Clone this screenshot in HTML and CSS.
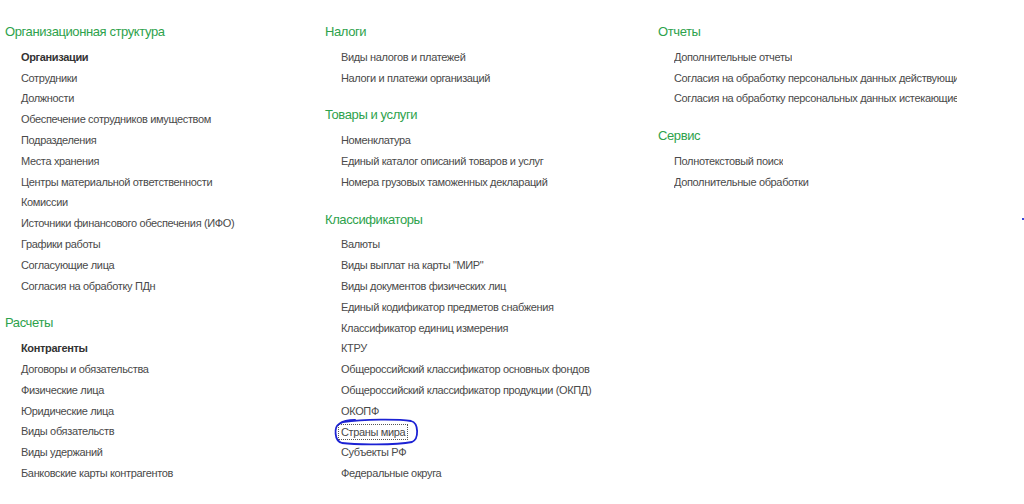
FILE: index.html
```html
<!DOCTYPE html>
<html lang="ru">
<head>
  <meta charset="UTF-8">
  <title>Нормативно-справочная информация</title>
  <link rel="stylesheet" href="styles.css">
</head>
<body>
  <div class="panel">
    <div class="column">
      <div class="section">
        <h2>Организационная структура</h2>
        <a class="strong">Организации</a>
        <a>Сотрудники</a>
        <a>Должности</a>
        <a>Обеспечение сотрудников имуществом</a>
        <a>Подразделения</a>
        <a>Места хранения</a>
        <a>Центры материальной ответственности</a>
        <a>Комиссии</a>
        <a>Источники финансового обеспечения (ИФО)</a>
        <a>Графики работы</a>
        <a>Согласующие лица</a>
        <a>Согласия на обработку ПДн</a>
      </div>
      <div class="section">
        <h2>Расчеты</h2>
        <a class="strong">Контрагенты</a>
        <a>Договоры и обязательства</a>
        <a>Физические лица</a>
        <a>Юридические лица</a>
        <a>Виды обязательств</a>
        <a>Виды удержаний</a>
        <a>Банковские карты контрагентов</a>
      </div>
    </div>

    <div class="column">
      <div class="section">
        <h2>Налоги</h2>
        <a>Виды налогов и платежей</a>
        <a>Налоги и платежи организаций</a>
      </div>
      <div class="section">
        <h2>Товары и услуги</h2>
        <a>Номенклатура</a>
        <a>Единый каталог описаний товаров и услуг</a>
        <a>Номера грузовых таможенных деклараций</a>
      </div>
      <div class="section">
        <h2>Классификаторы</h2>
        <a>Валюты</a>
        <a>Виды выплат на карты "МИР"</a>
        <a>Виды документов физических лиц</a>
        <a>Единый кодификатор предметов снабжения</a>
        <a>Классификатор единиц измерения</a>
        <a>КТРУ</a>
        <a>Общероссийский классификатор основных фондов</a>
        <a>Общероссийский классификатор продукции (ОКПД)</a>
        <a>ОКОПФ</a>
        <a class="current">Страны мира
          <svg class="mark" width="86" height="28" viewBox="0 0 86 28">
            <path d="M9 4 C30 1 65 1 77 3 C85 5 85 21 78 24 C62 27 22 27 8 25 C0 23 0 9 5 6 C9 3 15 2 21 2" fill="none" stroke="#1c22d4" stroke-width="1.8" stroke-linecap="round"/>
          </svg>
        </a>
        <a>Субъекты РФ</a>
        <a>Федеральные округа</a>
      </div>
    </div>

    <div class="column wide">
      <div class="section">
        <h2>Отчеты</h2>
        <a>Дополнительные отчеты</a>
        <a>Согласия на обработку персональных данных действующие</a>
        <a>Согласия на обработку персональных данных истекающие</a>
      </div>
      <div class="section">
        <h2>Сервис</h2>
        <a>Полнотекстовый поиск</a>
        <a>Дополнительные обработки</a>
      </div>
    </div>
  </div>
  <span class="edge-dot"></span>
</body>
</html>
```

FILE: styles.css
```css
body {
  margin: 0;
  background-color: #fff;
  font-family: "Liberation Sans", Arial, sans-serif;
  overflow: hidden;
}

.panel {
  display: grid;
  grid-template-columns: 320px 333px 300px;
  padding: 22px 0 0 5px;
}

.column {
  display: flex;
  flex-direction: column;
  gap: 17px;
}

.section {
  display: flex;
  flex-direction: column;
}

.section h2 {
  margin: 0 0 4px 0;
  font-size: 13px;
  font-weight: normal;
  letter-spacing: -0.4px;
  line-height: 20.8px;
  color: #2ea24c;
}

.section a {
  position: relative;
  align-self: flex-start;
  margin-left: 16px;
  font-size: 11px;
  letter-spacing: -0.35px;
  line-height: 20.8px;
  color: #4a4a4a;
  white-space: nowrap;
}

.section a.strong {
  font-weight: bold;
  color: #333;
}

.wide .section a {
  max-width: 283px;
  overflow: hidden;
}

/* focused item: dotted frame round the text */
.section a.current {
  line-height: 14.8px;
  margin: 2px 0 2px 13px;
  padding: 0 2px;
  border: 1px dotted #555;
}

.mark {
  position: absolute;
  left: -5px;
  top: -7px;
  pointer-events: none;
}

.edge-dot {
  position: absolute;
  left: 1022px;
  top: 218px;
  width: 2px;
  height: 2px;
  background-color: #3a46d8;
}
```
